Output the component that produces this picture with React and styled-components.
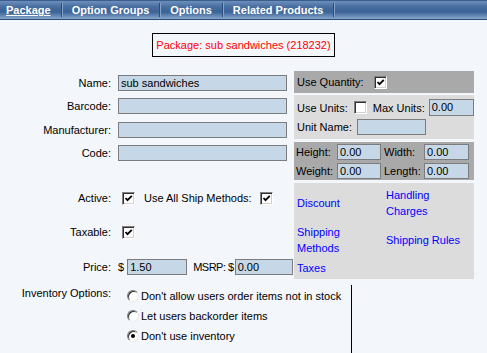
import styled, { createGlobalStyle } from "styled-components";

const GlobalStyle = createGlobalStyle`
  body {
    margin: 0;
    background: #f3f6fa;
    font-family: "Liberation Sans", Arial, sans-serif;
    font-size: 11px;
    color: #000;
  }
`;

const TabBar = styled.div`
  display: flex;
  align-items: center;
  box-sizing: border-box;
  height: 20px;
  border-top: 1px solid #3a5f8f;
  border-bottom: 1px solid #2a4c7a;
  background: linear-gradient(#6d8fbb 0%, #4a70a2 30%, #3a6296 60%, #6a8cba 85%, #8aa7cc 100%);
`;

const Tab = styled.div`
  height: 14px;
  line-height: 14px;
  padding: 0 10px;
  padding-left: ${(p) => (p.first ? "6px" : "10px")};
  color: #fff;
  font-weight: bold;
  font-size: 11px;
  text-decoration: ${(p) => (p.active ? "underline" : "none")};
  border-right: 1px solid #2b4c7a;
  box-shadow: 1px 0 0 #86a2c6;
  white-space: nowrap;
`;

const TitleWrap = styled.div`
  display: flex;
  justify-content: center;
  margin-top: 13px;
`;

const TitleBox = styled.div`
  border: 1px solid #000;
  color: #f00;
  height: 24px;
  box-sizing: border-box;
  padding: 0 3px;
  line-height: 22px;
`;

const Main = styled.div`
  display: grid;
  grid-template-columns: 294px 180px;
  margin-top: 13px;
`;

const LeftCol = styled.div`
  display: flex;
  flex-direction: column;
`;

const FormRow = styled.div`
  display: grid;
  grid-template-columns: 111px 1fr;
  column-gap: 7px;
  align-items: center;
  height: ${(p) => p.h || 23}px;
  margin-top: ${(p) => p.mt || 0}px;
`;

const Label = styled.div`
  text-align: right;
  white-space: nowrap;
`;

const Controls = styled.div`
  display: flex;
  align-items: center;
  white-space: nowrap;
`;

const TextInput = styled.div`
  box-sizing: border-box;
  height: 16px;
  width: ${(p) => p.w || 169}px;
  border: 1px solid #7c7c7c;
  background: #c6d8e7;
  padding: 0 2px;
  line-height: 14px;
  margin-left: ${(p) => p.ml || 0}px;
  white-space: nowrap;
  overflow: hidden;
  flex-shrink: 0;
`;

const Text = styled.span`
  margin-left: ${(p) => p.ml || 0}px;
  letter-spacing: ${(p) => (p.tight ? "-0.5px" : "normal")};
`;

const Box = styled.span`
  display: inline-flex;
  box-sizing: border-box;
  width: 13px;
  height: 13px;
  background: #fff;
  border: 1px solid;
  border-color: #808080 #fff #fff #808080;
  box-shadow: inset 1px 1px 0 #303030, inset -1px -1px 0 #d4d0c8;
  margin-left: ${(p) => p.ml || 0}px;
  flex-shrink: 0;
`;

const Check = ({ checked, ml }) => (
  <Box ml={ml}>
    {checked && (
      <svg width="11" height="11" viewBox="0 0 11 11">
        <polyline points="2.5,5 4.5,7.2 8.8,2.8" fill="none" stroke="#000" strokeWidth="1.8" />
      </svg>
    )}
  </Box>
);

const RadioCircle = styled.span`
  display: inline-flex;
  align-items: center;
  justify-content: center;
  box-sizing: border-box;
  width: 12px;
  height: 12px;
  border-radius: 50%;
  background: #fff;
  border: 1px solid;
  border-color: #7a7a7a #e8e8e8 #e8e8e8 #7a7a7a;
  box-shadow: inset 1px 1px 0 #303030;
  margin-left: 9px;
  margin-right: 2px;
  flex-shrink: 0;

  &::after {
    content: "";
    display: ${(p) => (p.checked ? "block" : "none")};
    width: 4px;
    height: 4px;
    border-radius: 50%;
    background: #000;
  }
`;

const InvRow = styled.div`
  display: grid;
  grid-template-columns: 111px 234px;
  column-gap: 7px;
`;

const InvLabel = styled(Label)`
  padding-top: 2px;
`;

const RadioList = styled.div`
  border-right: 1px solid #000;
  padding-top: 1px;
  height: 69px;
  display: flex;
  flex-direction: column;
`;

const RadioRow = styled.div`
  display: flex;
  align-items: center;
  height: 20px;
  white-space: nowrap;
`;

const RightCol = styled.div`
  display: flex;
  flex-direction: column;
`;

const Panel = styled.div`
  background: ${(p) => (p.dark ? "#a9a9a9" : "#dcdcdc")};
  height: ${(p) => p.h}px;
  margin-top: ${(p) => p.mt}px;
  box-sizing: border-box;
  padding: ${(p) => p.pad || "0 0 0 3px"};
  display: flex;
  flex-direction: column;
  justify-content: ${(p) => p.justify || "center"};
`;

const PanelRow = styled.div`
  display: flex;
  align-items: center;
  height: ${(p) => p.h || 19}px;
  white-space: nowrap;
`;

const DimGrid = styled.div`
  display: grid;
  grid-template-columns: 41px 44px 43px 45px;
  row-gap: 3px;
  align-items: center;
`;

const LinkGrid = styled.div`
  display: grid;
  grid-template-columns: 89px 86px;
  grid-template-rows: 36px 37px 20px;
  align-items: center;
  line-height: 16px;
`;

const Link = styled.a`
  display: block;
  padding-right: 6px;
  color: #00f;
  text-decoration: none;
  cursor: pointer;
`;

export default function App() {
  return (
    <>
      <GlobalStyle />
      <TabBar>
        <Tab first active>Package</Tab>
        <Tab>Option Groups</Tab>
        <Tab>Options</Tab>
        <Tab>Related Products</Tab>
      </TabBar>

      <TitleWrap>
        <TitleBox>Package: sub sandwiches (218232)</TitleBox>
      </TitleWrap>

      <Main>
        <LeftCol>
          <FormRow mt={1}>
            <Label>Name:</Label>
            <TextInput>sub sandwiches</TextInput>
          </FormRow>
          <FormRow h={24}>
            <Label>Barcode:</Label>
            <TextInput />
          </FormRow>
          <FormRow>
            <Label>Manufacturer:</Label>
            <TextInput />
          </FormRow>
          <FormRow>
            <Label>Code:</Label>
            <TextInput />
          </FormRow>

          <FormRow h={34} mt={17}>
            <Label>Active:</Label>
            <Controls>
              <Check checked ml={4} />
              <Text ml={9}>Use All Ship Methods:</Text>
              <Check checked ml={8} />
            </Controls>
          </FormRow>
          <FormRow h={34}>
            <Label>Taxable:</Label>
            <Controls>
              <Check checked ml={4} />
            </Controls>
          </FormRow>
          <FormRow h={36}>
            <Label>Price:</Label>
            <Controls>
              <span>$</span>
              <TextInput w={60} ml={3}>1.50</TextInput>
              <Text tight ml={6}>MSRP: $</Text>
              <TextInput w={58} ml={1}>0.00</TextInput>
            </Controls>
          </FormRow>

          <InvRow>
            <InvLabel>Inventory Options:</InvLabel>
            <RadioList>
              <RadioRow>
                <RadioCircle />
                Don't allow users order items not in stock
              </RadioRow>
              <RadioRow>
                <RadioCircle />
                Let users backorder items
              </RadioRow>
              <RadioRow>
                <RadioCircle checked />
                Don't use inventory
              </RadioRow>
            </RadioList>
          </InvRow>
        </LeftCol>

        <RightCol>
          <Panel dark h={22} mt={1}>
            <PanelRow>
              Use Quantity:
              <Check checked ml={10} />
            </PanelRow>
          </Panel>

          <Panel h={44} mt={2}>
            <PanelRow>
              Use Units:
              <Check ml={6} />
              <Text ml={6}>Max Units:</Text>
              <TextInput w={45} ml={4} style={{ height: 17 }}>0.00</TextInput>
            </PanelRow>
            <PanelRow>
              Unit Name:
              <TextInput w={69} ml={5}>&nbsp;</TextInput>
            </PanelRow>
          </Panel>

          <Panel dark h={38} mt={3} pad="0 0 0 2px">
            <DimGrid>
              <span>Height:</span>
              <TextInput w={44}>0.00</TextInput>
              <Text ml={3}>Width:</Text>
              <TextInput w={45}>0.00</TextInput>
              <span>Weight:</span>
              <TextInput w={44}>0.00</TextInput>
              <Text ml={3}>Length:</Text>
              <TextInput w={45}>0.00</TextInput>
            </DimGrid>
          </Panel>

          <Panel h={96} mt={3} justify="flex-start" pad="2px 0 0 3px">
            <LinkGrid>
              <Link>Discount</Link>
              <Link>Handling Charges</Link>
              <Link>Shipping Methods</Link>
              <Link>Shipping Rules</Link>
              <Link>Taxes</Link>
            </LinkGrid>
          </Panel>
        </RightCol>
      </Main>
    </>
  );
}
